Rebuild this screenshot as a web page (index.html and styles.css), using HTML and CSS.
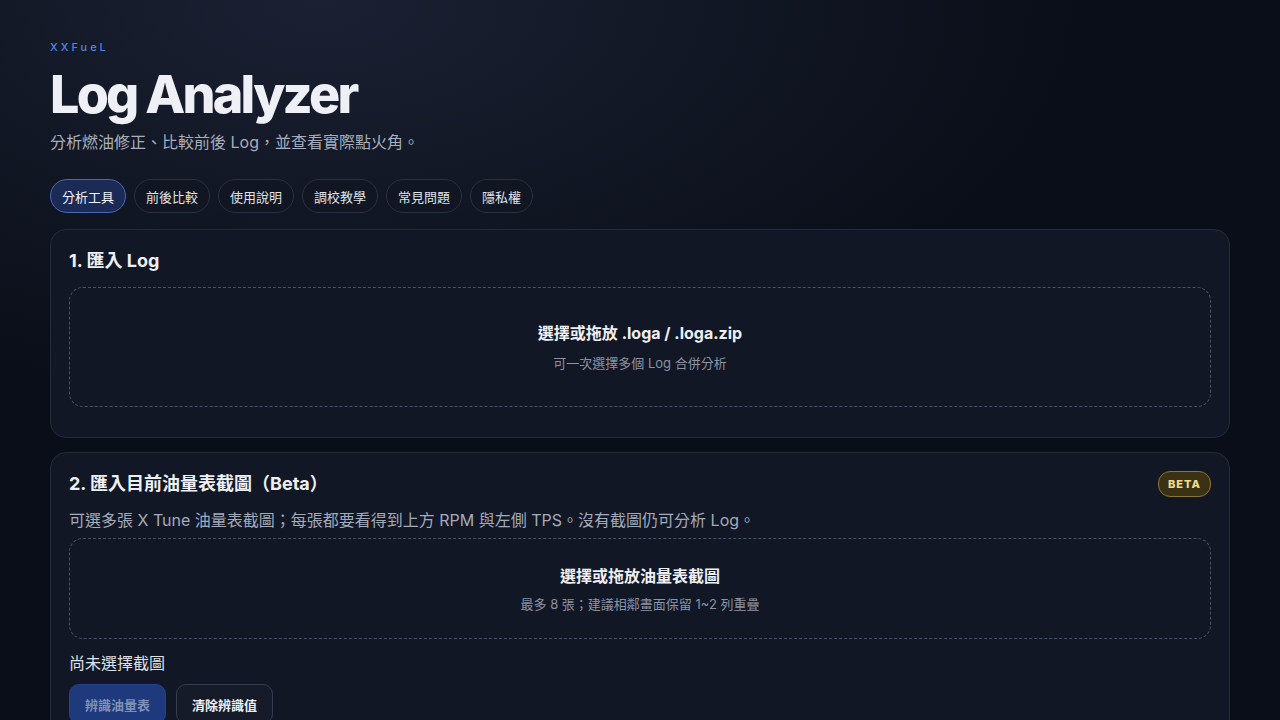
FILE: index.html
```html
<!DOCTYPE html>
<html lang="zh-Hant">
<head>
    <meta charset="UTF-8">
    <meta name="viewport" content="width=device-width, initial-scale=1.0">
    <title>XXFueL Log Analyzer</title>
    <link rel="stylesheet" href="styles.css">
</head>
<body>
<div class="page">

    <header class="hero">
        <div class="brand">XXFueL</div>
        <h1>Log Analyzer</h1>
        <p class="lead">分析燃油修正、比較前後 Log，並查看實際點火角。</p>
    </header>

    <nav class="tabs">
        <button type="button" class="tab active">分析工具</button>
        <button type="button" class="tab">前後比較</button>
        <button type="button" class="tab">使用說明</button>
        <button type="button" class="tab">調校教學</button>
        <button type="button" class="tab">常見問題</button>
        <button type="button" class="tab">隱私權</button>
    </nav>

    <!-- Step 1: log files -->
    <section class="card">
        <h2>1. 匯入 Log</h2>
        <label class="dropzone dropzone-log">
            <span class="drop-title">選擇或拖放 .loga / .loga.zip</span>
            <span class="drop-hint">可一次選擇多個 Log 合併分析</span>
        </label>
    </section>

    <!-- Step 2: fuel table screenshots -->
    <section class="card">
        <div class="card-head">
            <h2>2. 匯入目前油量表截圖（Beta）</h2>
            <span class="badge">BETA</span>
        </div>
        <p class="note">可選多張 X Tune 油量表截圖；每張都要看得到上方 RPM 與左側 TPS。沒有截圖仍可分析 Log。</p>
        <label class="dropzone dropzone-shot">
            <span class="drop-title">選擇或拖放油量表截圖</span>
            <span class="drop-hint">最多 8 張；建議相鄰畫面保留 1~2 列重疊</span>
        </label>
        <div class="status">尚未選擇截圖</div>
        <div class="actions">
            <button type="button" class="btn btn-primary" disabled>辨識油量表</button>
            <button type="button" class="btn">清除辨識值</button>
        </div>
    </section>

</div>
</body>
</html>
```

FILE: styles.css
```css
* {
    box-sizing: border-box;
}

html, body {
    margin: 0;
    height: 100%;
}

body {
    font-family: Inter, "Noto Sans CJK TC", "Noto Sans", sans-serif;
    color: #e6e9f0;
    background-color: #0a0e18;
    background-image:
        radial-gradient(ellipse 760px 400px at 320px 0px, rgba(40, 48, 72, 0.55), rgba(10, 14, 24, 0) 100%);
    overflow: hidden;
}

.page {
    width: 1180px;
    margin: 0 auto;
    padding-top: 39px;
}

.hero {
    margin-bottom: 25px;
}

.brand {
    font-size: 11px;
    line-height: 16px;
    letter-spacing: 3px;
    color: #4f86e0;
    font-weight: 500;
}

h1 {
    margin: 9px 0 0;
    font-size: 52px;
    line-height: 62px;
    font-weight: 800;
    letter-spacing: -2.75px;
    color: #eef0f5;
}

.lead {
    margin: 4px 0 0;
    font-size: 16px;
    line-height: 24px;
    color: #a7aebd;
}

.tabs {
    display: flex;
    gap: 8px;
    margin-bottom: 16px;
}

.tab {
    font-family: inherit;
    font-size: 13px;
    height: 34px;
    padding: 0 11px;
    border-radius: 17px;
    border: 1px solid #2a3140;
    background-color: #111622;
    color: #dfe3ea;
    cursor: pointer;
}

.tab.active {
    background-color: #1b2b55;
    border-color: #4868b4;
    color: #eef2fb;
}

.card {
    background-color: #121725;
    border: 1px solid #242b3a;
    border-radius: 16px;
    padding: 18px 18px 30px;
    margin-bottom: 14px;
}

.card h2 {
    margin: 0;
    font-size: 18px;
    line-height: 26px;
    font-weight: 700;
    color: #eef0f5;
}

.card-head {
    display: flex;
    justify-content: space-between;
    align-items: center;
}

.badge {
    font-size: 11px;
    font-weight: 800;
    letter-spacing: 1px;
    color: #f3dc8a;
    background-color: #3b3216;
    border: 1px solid #8a7634;
    border-radius: 12px;
    padding: 5px 9px;
    line-height: 14px;
}

.dropzone {
    display: flex;
    flex-direction: column;
    align-items: center;
    justify-content: center;
    border: 1.5px dashed #4a5365;
    border-radius: 14px;
    text-align: center;
    cursor: pointer;
}

.dropzone-log {
    margin-top: 13px;
    height: 120px;
}

.dropzone-shot {
    height: 101px;
}

.drop-title {
    font-size: 16px;
    font-weight: 700;
    line-height: 24px;
    color: #eef0f5;
}

.drop-hint {
    font-size: 13px;
    line-height: 20px;
    color: #8b93a4;
    margin-top: 6px;
}

.dropzone-log .drop-hint {
    margin-top: 8px;
}

.note {
    margin: 12px 0 7px;
    font-size: 16px;
    line-height: 22px;
    color: #a3abba;
}

.status {
    margin-top: 13px;
    font-size: 16px;
    line-height: 22px;
    color: #dde1e8;
}

.actions {
    display: flex;
    gap: 10px;
    margin-top: 10px;
}

.btn {
    font-family: inherit;
    font-size: 13px;
    font-weight: 700;
    height: 40px;
    padding: 0 15px;
    border-radius: 10px;
    border: 1px solid #353d4e;
    background-color: #151b29;
    color: #eef0f5;
    cursor: pointer;
}

.btn-primary {
    background-color: #1e3a7c;
    border-color: #234391;
    color: #7f91b8;
    cursor: default;
}
```
